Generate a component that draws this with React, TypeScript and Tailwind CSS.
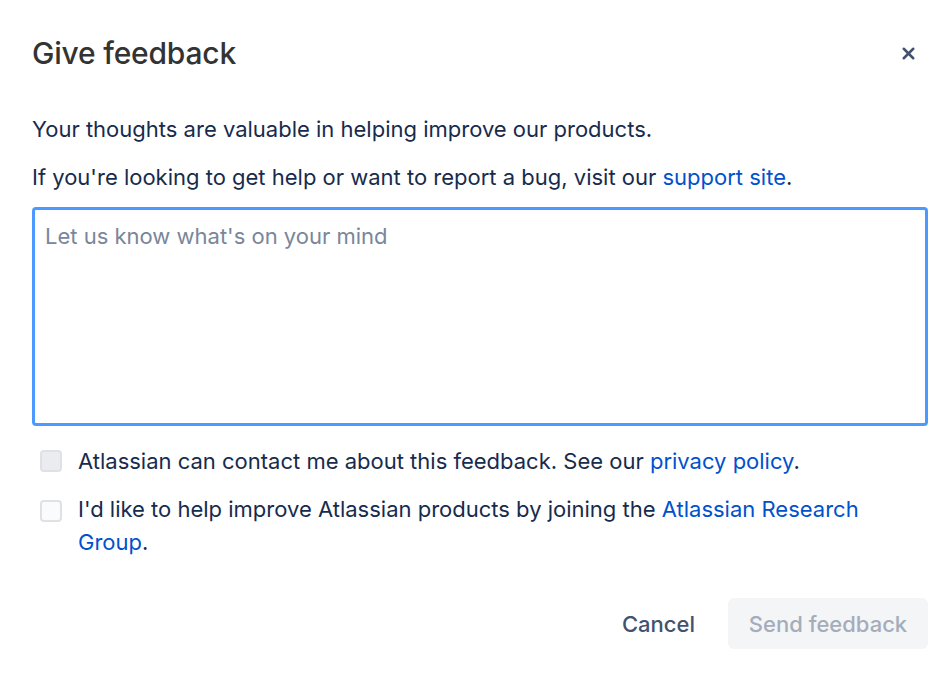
import { X } from 'lucide-react'

export default function App() {
  return (
    <div className="w-[946px] h-[674px] bg-white font-['Inter','Noto_Sans',sans-serif] text-[#172b4d]">
      <div className="pl-8 pr-[22px] pt-[32px]">
        {/* Header */}
        <div className="flex items-center justify-between h-[42px]">
          <h1 className="text-[30px] font-medium text-[#333] tracking-[-0.2px]">Give feedback</h1>
          <button className="w-8 h-8 flex items-center justify-center text-[#42526e]">
            <X className="w-[19px] h-[19px]" strokeWidth={3.2} />
          </button>
        </div>

        <div className="mt-[41px] text-[22px] leading-[28px] w-[896px]">
          <p>Your thoughts are valuable in helping improve our products.</p>
          <p className="mt-[20px]">
            If you're looking to get help or want to report a bug, visit our{' '}
            <a className="text-[#0052cc]">support site</a>.
          </p>

          <textarea
            className="mt-[16px] block w-full h-[219px] resize-none rounded-[4px] border-[3px] border-[#4c9aff] px-[10px] py-[12px] text-[22px] leading-[28px] outline-none placeholder:text-[#7a869a]"
            placeholder="Let us know what's on your mind"
          />

          {/* Checkboxes */}
          <div className="mt-[19px] flex flex-col gap-[16px] pl-2">
            <label className="flex items-start gap-[16px]">
              <span className="mt-[5px] w-[22px] h-[22px] shrink-0 rounded-[4px] border-2 border-[#dfe1e6] bg-[#ebecf0]" />
              <span className="leading-[32px]">
                Atlassian can contact me about this feedback. See our{' '}
                <a className="text-[#0052cc]">privacy policy</a>.
              </span>
            </label>
            <label className="flex items-start gap-[16px]">
              <span className="mt-[7px] w-[22px] h-[22px] shrink-0 rounded-[4px] border-2 border-[#dfe1e6] bg-[#fafbfc]" />
              <span className="leading-[33px] w-[800px]">
                <span>I'd like to help improve Atlassian products by joining the </span>
                <a className="text-[#0052cc]">Atlassian Research</a>
                <br />
                <a className="text-[#0052cc]">Group</a>.
              </span>
            </label>
          </div>

          {/* Footer */}
          <div className="mt-[39px] flex justify-end items-center gap-[17px]">
            <button className="h-[51px] px-4 text-[22px] font-medium text-[#42526e] rounded-[4px]">Cancel</button>
            <button className="h-[51px] w-[200px] text-[22px] font-medium text-[#a5adba] bg-[#f4f5f7] rounded-[6px]">Send feedback</button>
          </div>
        </div>
      </div>
    </div>
  )
}
